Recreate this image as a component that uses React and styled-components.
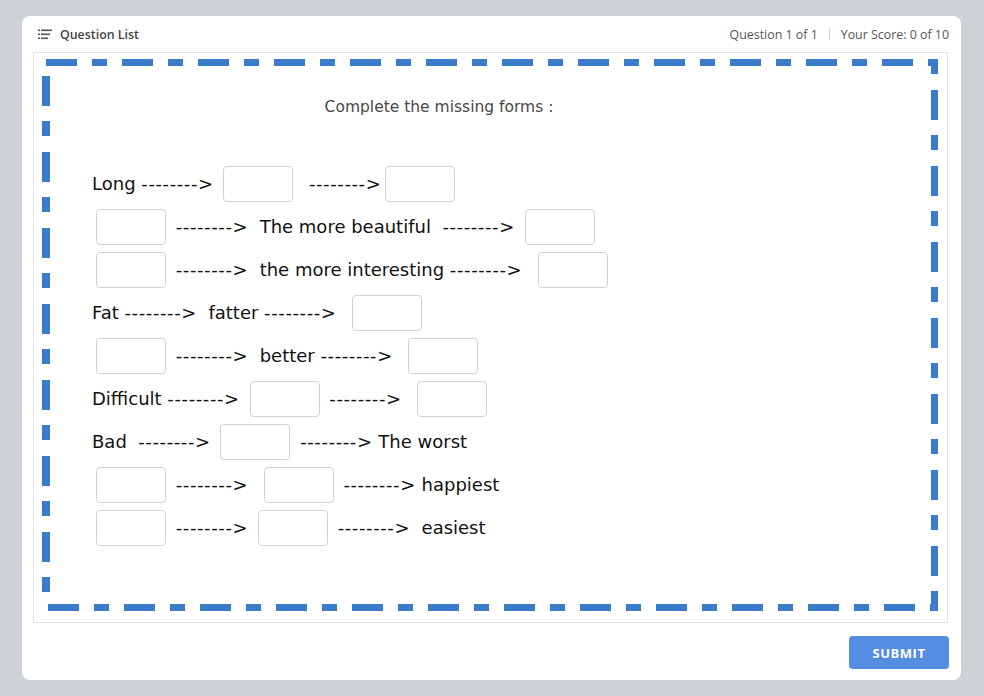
import React from 'react';
import styled, { createGlobalStyle } from 'styled-components';

const GlobalStyle = createGlobalStyle`
  html, body {
    margin: 0;
    padding: 0;
    background: #cdd0d4;
    font-family: "Open Sans", "Liberation Sans", sans-serif;
  }
`;

const BLUE = '#3b7bcc';

const Page = styled.div`
  padding: 16px 23px 16px 22px;
`;

const Card = styled.div`
  background: #fff;
  border-radius: 8px;
  padding: 0 12px 11px 11px;
  height: 664px;
  box-sizing: border-box;
  display: flex;
  flex-direction: column;
`;

const Header = styled.header`
  height: 36px;
  display: flex;
  align-items: center;
  justify-content: space-between;
  padding-left: 5px;
  font-size: 12.4px;
  color: #555;
`;

const ListButton = styled.div`
  display: flex;
  align-items: center;
  gap: 7px;
  font-weight: 600;
  color: #444;
`;

const Meta = styled.div`
  display: flex;
  align-items: center;
`;

const Divider = styled.span`
  width: 1px;
  height: 12px;
  background: #d6d6d6;
  margin: 0 11px;
`;

const Content = styled.div`
  flex: 1;
  border: 1px solid #e2e2e2;
  margin-right: 1px;
  padding: 6px 9px 11px 8px;
`;

const Frame = styled.div`
  height: 100%;
  box-sizing: border-box;
  padding: 38px 0 0 50px;
  background:
    repeating-linear-gradient(90deg, ${BLUE} 0 31px, transparent 31px 46px, ${BLUE} 46px 61px, transparent 61px 76px) 4px 0 / calc(100% - 4px) 7px no-repeat,
    repeating-linear-gradient(180deg, ${BLUE} 0 15px, transparent 15px 31px, ${BLUE} 31px 61px, transparent 61px 76px) right 0 top 0 / 7px 100% no-repeat,
    repeating-linear-gradient(90deg, ${BLUE} 0 31px, transparent 31px 46px, ${BLUE} 46px 61px, transparent 61px 76px) 6px 100% / calc(100% - 6px) 7px no-repeat,
    repeating-linear-gradient(180deg, ${BLUE} 0 30px, transparent 30px 45px, ${BLUE} 45px 60px, transparent 60px 76px) 0 17px / 8px calc(100% - 33px) no-repeat;
`;

const Title = styled.div`
  font-family: "DejaVu Sans", sans-serif;
  font-size: 15.5px;
  line-height: 20px;
  color: #484848;
  text-align: center;
  padding-right: 152px;
  margin-bottom: 45px;
`;

const Row = styled.div`
  display: flex;
  align-items: center;
  height: 43px;
  white-space: pre;
  font-family: "DejaVu Sans", sans-serif;
  font-size: 18px;
  color: #111;
`;

const Arrow = styled.span`
  letter-spacing: 0.6px;
`;

const Blank = styled.input`
  width: 70px;
  height: 36px;
  box-sizing: border-box;
  border: 1px solid #d2d2d2;
  border-radius: 4px;
  background: #fff;
  margin: 0 4px;
  padding: 0 6px;
  font: inherit;
  outline: none;
`;

const Footer = styled.div`
  display: flex;
  justify-content: flex-end;
  padding-top: 13px;
`;

const SubmitButton = styled.button`
  width: 100px;
  height: 33px;
  border: none;
  border-radius: 4px;
  background: #548de2;
  color: #fff;
  font-family: "Open Sans", sans-serif;
  font-weight: 700;
  font-size: 13px;
  letter-spacing: 0.5px;
  cursor: pointer;
`;

const ListIcon = () => (
  <svg width="15" height="11" viewBox="0 0 15 11" fill="#555">
    <rect x="0" y="0.5" width="2" height="1.6" />
    <rect x="0" y="4.5" width="2" height="1.6" />
    <rect x="0" y="8.5" width="2" height="1.6" />
    <rect x="3" y="0.5" width="11" height="1.6" />
    <rect x="3" y="4.5" width="9" height="1.6" />
    <rect x="3" y="8.5" width="7" height="1.6" />
  </svg>
);

// each row: strings are plain text, null is a blank box
const rows = [
  ['Long --------> ', null, '  -------->', null],
  [null, ' -------->  The more beautiful  --------> ', null],
  [null, ' -------->  the more interesting -------->  ', null],
  ['Fat -------->  fatter --------> ', ' ', null],
  [null, ' -------->  better --------> ', ' ', null],
  ['Difficult --------> ', null, ' --------> ', ' ', null],
  ['Bad  --------> ', null, ' --------> The worst'],
  [null, ' -------->  ', null, ' --------> happiest'],
  [null, ' --------> ', null, ' -------->  easiest'],
];

const renderText = (text) =>
  text.split(/(-------->)/).map((bit, k) =>
    bit === '-------->' ? <Arrow key={k}>{bit}</Arrow> : bit
  );

export default function App() {
  return (
    <>
      <GlobalStyle />
      <Page>
        <Card>
          <Header>
            <ListButton>
              <ListIcon />
              Question List
            </ListButton>
            <Meta>
              <span>Question 1 of 1</span>
              <Divider />
              <span>Your Score: 0 of 10</span>
            </Meta>
          </Header>
          <Content>
            <Frame>
              <Title>Complete the missing forms :</Title>
              {rows.map((row, i) => (
                <Row key={i}>
                  {row.map((part, j) =>
                    part === null ? <Blank key={j} type="text" /> : <span key={j}>{renderText(part)}</span>
                  )}
                </Row>
              ))}
            </Frame>
          </Content>
          <Footer>
            <SubmitButton>SUBMIT</SubmitButton>
          </Footer>
        </Card>
      </Page>
    </>
  );
}
